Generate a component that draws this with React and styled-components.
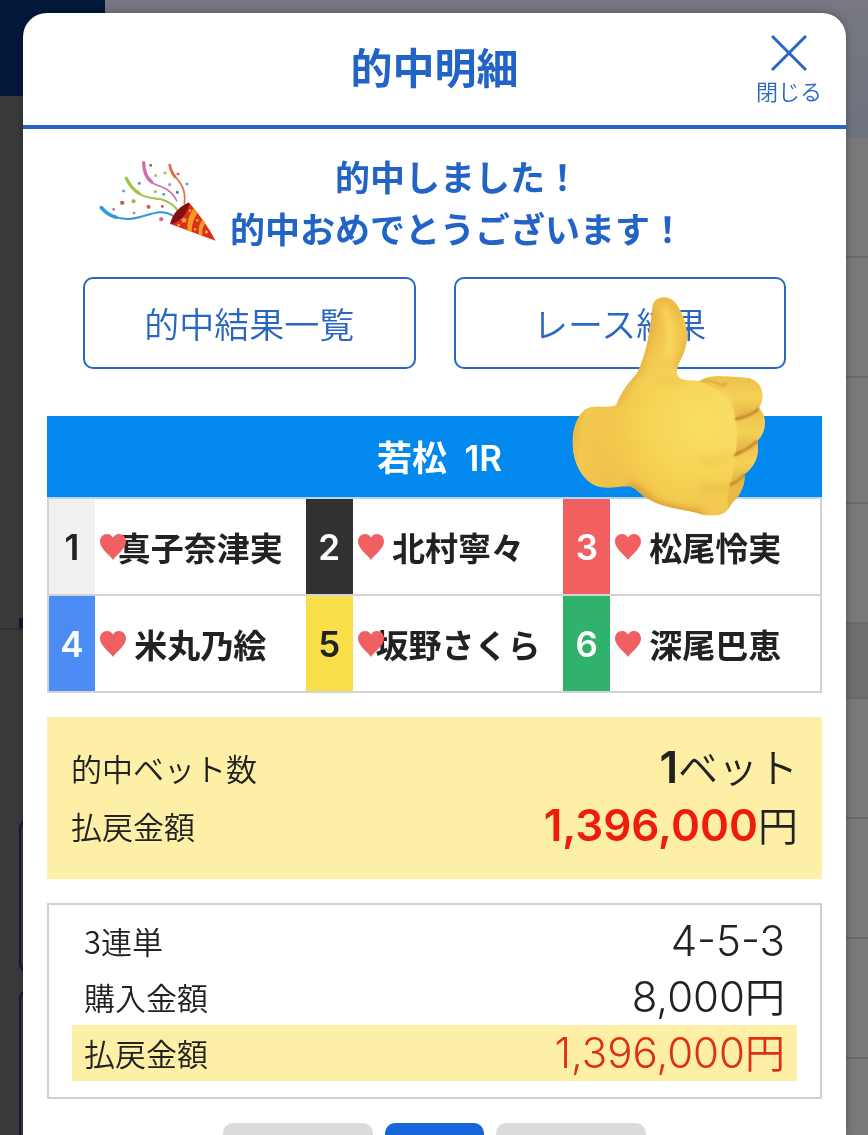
import React from "react";
import styled, { createGlobalStyle } from "styled-components";

const cjk = `"Noto Sans CJK JP", sans-serif`;

const GlobalStyle = createGlobalStyle`
  * {
    box-sizing: border-box;
  }

  body {
    margin: 0;
    background: #787878;
    color: #222;
    font-family: Inter, ${cjk};
    font-weight: 350;
    overflow: hidden;
  }

  button {
    font: inherit;
    padding: 0;
    cursor: pointer;
  }
`;

/* page behind the dialog */

const Backdrop = styled.div`
  display: flex;
  height: 100vh;
  overflow: hidden;
`;

const Rail = styled.div`
  width: 105px;
  background: #3a3a3a;
`;

const Brand = styled.div`
  height: 96px;
  background: #04183b;
`;

const RailBlock = styled.div`
  height: 534px;
  border-bottom: 2px solid #303030;
  display: flex;
  align-items: flex-end;
  padding-left: 19px;
`;

const RailTab = styled.div`
  height: 10px;
  width: 86px;
  background: #101838;
`;

const RailCards = styled.div`
  display: flex;
  flex-direction: column;
  gap: 18px;
  padding: 190px 0 0 19px;
`;

const RailCard = styled.div`
  height: 152px;
  border: 2px solid #14193f;
  border-radius: 8px;
`;

const Listing = styled.div`
  flex: 1;
`;

const ListingTop = styled.div`
  height: 138px;
  background: linear-gradient(#777881, #6f737d);
`;

const ListingRow = styled.div`
  height: ${(props) => props.$height || 120}px;
  border-bottom: 2px solid #696969;
  background: ${(props) => (props.$dark ? "#6e6e6e" : "#797979")};
`;

/* dialog */

const Modal = styled.section`
  position: fixed;
  top: 13px;
  left: 23px;
  right: 22px;
  bottom: 0;
  overflow: hidden;
  background: #fff;
  border-radius: 24px 24px 0 0;
  box-shadow: 0 0 8px rgba(0, 0, 0, 0.3);
`;

const Header = styled.header`
  display: grid;
  grid-template-columns: 1fr auto 1fr;
  align-items: center;
  height: 116px;
  padding: 0 24px;
  border-bottom: 4px solid #2765c4;
`;

const Title = styled.h1`
  grid-column: 2;
  margin: 0;
  color: #2263c8;
  font-size: 42px;
  line-height: 60px;
  font-weight: 700;
`;

const CloseButton = styled.button`
  justify-self: end;
  display: flex;
  flex-direction: column;
  align-items: center;
  gap: 6px;
  padding-top: 4px;
  border: none;
  background: none;
  color: #2a66c4;
  font-size: 22px;
  line-height: 30px;
`;

const Message = styled.div`
  display: flex;
  align-items: flex-start;
  height: 148px;
  padding: 21px 67px 0;
`;

const MessageText = styled.p`
  margin: 0;
  color: #2263c8;
  font-family: ${cjk};
  font-size: 35px;
  line-height: 52px;
  font-weight: 700;
  text-align: center;
  white-space: nowrap;
`;

const Actions = styled.div`
  position: relative;
  display: grid;
  grid-template-columns: 1fr 1fr;
  gap: 38px;
  padding: 0 60px;
`;

const ActionButton = styled.button`
  height: 92px;
  border: 2px solid #2a66c4;
  border-radius: 10px;
  background: #fff;
  color: #2a66c4;
  font-family: ${cjk};
  font-size: 35px;
  line-height: 52px;
`;

const Thumb = styled.svg`
  position: absolute;
  top: 3px;
  right: 66px;
  width: 220px;
  height: 240px;
  pointer-events: none;
`;

const Body = styled.div`
  display: flex;
  flex-direction: column;
  gap: 24px;
  padding: 47px 24px 0;
`;

const RaceTable = styled.table`
  width: 100%;
  table-layout: fixed;
  border-collapse: collapse;
`;

const RaceName = styled.th`
  height: 81px;
  padding: 0 0 0 10px;
  background: #0388ee;
  border: 2px solid #0388ee;
  border-bottom-color: #b4d6f5;
  color: #fff;
  font-size: 35px;
  line-height: 52px;
  font-weight: 600;
`;

const NumberCol = styled.col`
  width: 47px;
`;

const RacerRow = styled.tr`
  height: 97px;
  border: 2px solid #d3d3d3;
`;

const Lane = styled.th`
  padding: 0;
  background: ${(props) => props.$bg};
  color: ${(props) => props.$color};
  font-size: 35px;
  font-weight: 600;
  text-align: center;
`;

const Racer = styled.td`
  position: relative;
  padding: 0;
  font-family: ${cjk};
  font-size: 33px;
  line-height: 48px;
  font-weight: 700;
  text-align: center;
  white-space: nowrap;
`;

const Heart = styled.svg`
  position: absolute;
  left: 5px;
  top: 50%;
  width: 26px;
  height: 26px;
  margin-top: -13px;
`;

const Summary = styled.dl`
  margin: 0;
  padding: 22px 24px 24px;
  background: #feefa6;
`;

const Detail = styled.dl`
  margin: 0;
  padding: 8px 23px 16px;
  border: 2px solid #d0d0d0;
`;

const Line = styled.div`
  display: flex;
  justify-content: space-between;
  align-items: center;
  height: ${(props) => (props.$tall ? 58 : 56)}px;
  padding: ${(props) => (props.$tall ? "0" : "0 12px")};
  background: ${(props) => (props.$hit ? "#feefa6" : "none")};
`;

const Label = styled.dt`
  font-family: ${cjk};
  font-size: 31px;
  line-height: 48px;
`;

const Value = styled.dd`
  margin: 0;
  color: ${(props) => (props.$hit ? "#dd3010" : "#222")};
  font-size: 40px;
  line-height: 56px;
  white-space: nowrap;
`;

const Figure = styled.span`
  font-size: 42px;
`;

const BigFigure = styled.strong`
  color: ${(props) => (props.$hit ? "#ee1d0b" : "#222")};
  font-size: 44px;
  font-weight: 600;
`;

const Pager = styled.nav`
  display: flex;
  justify-content: center;
  gap: 12px;
`;

const PagerButton = styled.button`
  width: ${(props) => (props.$current ? 99 : 150)}px;
  height: 60px;
  border: none;
  border-radius: 10px;
  background: ${(props) => (props.$current ? "#1665da" : "#dbdbdb")};
`;

const racers = [
  [
    { lane: 1, name: "真子奈津実", bg: "#f1f1f1", color: "#222" },
    { lane: 2, name: "北村寧々", bg: "#323232", color: "#fff" },
    { lane: 3, name: "松尾怜実", bg: "#f15f61", color: "#fff" },
  ],
  [
    { lane: 4, name: "米丸乃絵", bg: "#4b8df5", color: "#fff" },
    { lane: 5, name: "坂野さくら", bg: "#f9e04a", color: "#222" },
    { lane: 6, name: "深尾巴恵", bg: "#30b26c", color: "#fff" },
  ],
];

const confetti = [
  [182, 46, "#a0643c"], [197, 77, "#9cc050"], [225, 69, "#b0b84a"], [264, 72, "#dc6a4c"],
  [148, 100, "#4a94cc"], [101, 123, "#5aa4dc"], [239, 104, "#a888c8"], [291, 102, "#58a4d8"],
  [196, 125, "#a4b060"], [221, 133, "#4aa0d8"], [262, 127, "#3878b8"], [71, 178, "#c878b0"],
  [132, 189, "#d88098"], [217, 169, "#c8643c"],
];

const confettiBig = [
  [97, 158, "#c05c3c"], [131, 153, "#98b844"], [176, 170, "#d4603c"], [214, 207, "#d860a0"],
];

const Popper = () => (
  <svg width="140" height="100" viewBox="0 0 420 300" aria-hidden="true">
    <g fill="none" strokeLinecap="round">
      <path d="M34 173 Q66 209 116 207 C170 205 205 168 252 199" stroke="#3298d6" strokeWidth="6" />
      <path d="M34 173 Q52 195 78 202" stroke="#3298d6" strokeWidth="11" />
      <path d="M109 85 C143 150 180 141 213 148 Q249 158 264 184" stroke="#a3c04b" strokeWidth="6" />
      <path d="M109 85 Q123 115 147 130" stroke="#a3c04b" strokeWidth="10" />
      <path d="M161 38 C164 98 190 101 216 111 Q246 123 260 152" stroke="#cf6faa" strokeWidth="5" />
      <path d="M161 38 Q161 77 185 96" stroke="#cf6faa" strokeWidth="10" />
      <path d="M239 45 C245 87 292 95 283 160" stroke="#d9703f" strokeWidth="5" />
      <path d="M239 45 Q243 66 255 81" stroke="#d9703f" strokeWidth="8" />
    </g>
    {confetti.map(([x, y, fill]) => (
      <rect key={`${x}-${y}`} x={x - 4} y={y - 4} width="8" height="8" rx="2" fill={fill} />
    ))}
    {confettiBig.map(([x, y, fill]) => (
      <path key={`${x}-${y}`} d={`M${x - 6} ${y - 4} l7 -2 l6 6 l-5 7 l-8 -2z`} fill={fill} />
    ))}
    <path d="M298 158 Q346 214 377 272 L241 222 Q247 178 298 158Z" fill="#dc2e1f" />
    <path d="M311 174 L323 188 Q305 214 305 245 L292 240 Q290 204 311 174Z" fill="#f59a24" />
    <path d="M338 207 L346 219 Q335 236 337 257 L326 253 Q323 228 338 207Z" fill="#f59a24" />
    <path d="M298 158 C286 157 248 186 241 222 C266 220 295 190 298 158Z" fill="#811015" />
    <g fill="#f2a532">
      <path d="M282 200 l3 6 7 1 -5 5 2 7 -7 -3 -6 4 1 -7 -5 -5 7 -1z" />
      <circle cx="266" cy="225" r="4" />
      <circle cx="300" cy="182" r="4" />
      <circle cx="322" cy="211" r="4" />
      <circle cx="315" cy="238" r="4" />
      <circle cx="349" cy="246" r="5" />
    </g>
  </svg>
);

const ThumbsUp = () => (
  <Thumb viewBox="0 0 660 720" aria-hidden="true">
    <defs>
      <radialGradient id="skin" gradientUnits="userSpaceOnUse" cx="430" cy="430" r="350">
        <stop offset="0" stopColor="#f8df62" />
        <stop offset="0.45" stopColor="#f6d456" />
        <stop offset="0.8" stopColor="#f2c64c" />
        <stop offset="1" stopColor="#edbc46" />
      </radialGradient>
      <linearGradient id="cuff" x1="0" y1="0" x2="1" y2="0.25">
        <stop offset="0" stopColor="#e4ad3b" />
        <stop offset="0.3" stopColor="#f2c850" />
        <stop offset="1" stopColor="#f3cb4e" stopOpacity="0" />
      </linearGradient>
      <linearGradient id="finger" x1="0" y1="0" x2="0" y2="1">
        <stop offset="0" stopColor="#eec04a" />
        <stop offset="0.5" stopColor="#f5d157" />
        <stop offset="1" stopColor="#e2ab3e" />
      </linearGradient>
      <filter id="soft" x="-30%" y="-30%" width="160%" height="160%">
        <feGaussianBlur stdDeviation="11" />
      </filter>
      <filter id="crease" x="-30%" y="-50%" width="160%" height="200%">
        <feGaussianBlur stdDeviation="3" />
      </filter>
      <clipPath id="hand">
        <path d="M277 82 C280 44 329 42 350 73 C374 108 387 157 379 190 C373 231 348 253 351 280 C356 306 391 300 418 303 C441 285 469 288 511 290 L554 293 C608 296 617 347 598 384 C624 411 618 457 592 483 C599 517 590 556 553 583 C557 618 539 648 512 674 C500 705 474 711 428 704 C371 685 319 690 259 654 C235 638 224 619 202 619 C171 620 142 628 112 619 C28 588 15 438 75 389 C101 371 146 389 169 374 C185 333 208 306 231 280 C261 219 270 151 277 82Z" />
      </clipPath>
    </defs>
    <g clipPath="url(#hand)">
      <rect width="660" height="720" fill="url(#skin)" />
      <path d="M30 370 H170 Q205 500 210 625 H30Z" fill="url(#cuff)" />
      <path d="M420 303 C460 278 560 285 590 300 C620 330 610 370 592 386 L526 420 Q519 355 470 330Z" fill="url(#finger)" />
      <path d="M526 420 L594 389 C627 410 620 465 590 485 L527 526 Q535 455 526 420Z" fill="url(#finger)" />
      <path d="M527 526 L592 484 C602 525 590 560 555 582 L510 616 Q528 560 527 526Z" fill="url(#finger)" />
      <path d="M510 616 L554 583 C558 630 530 665 505 687 Q498 650 510 616Z" fill="#e9b945" />
      <g filter="url(#soft)" fill="none">
        <path d="M277 82 Q270 190 231 280 Q196 310 169 374" stroke="#dfa63d" strokeWidth="12" />
        <path d="M290 300 Q330 310 380 305" stroke="#eabb49" strokeWidth="8" />
        <path d="M387 165 Q375 225 350 265" stroke="#dca13a" strokeWidth="12" />
        <path d="M202 616 Q237 624 260 654 T428 704" stroke="#d99c39" strokeWidth="24" />
        <path d="M410 538 Q454 556 506 527" stroke="#edc44e" strokeWidth="12" />
        <path d="M420 620 Q464 636 506 618" stroke="#e6b547" strokeWidth="12" />
        <path d="M465 340 Q515 355 515 420 Q520 484 504 510" stroke="#f8df6c" strokeWidth="15" />
        <path d="M310 80 Q348 150 320 230" stroke="#fadb64" strokeWidth="22" />
      </g>
      <g filter="url(#crease)" fill="none" strokeLinecap="round">
        <path d="M528 418 Q568 409 596 387" stroke="#a86d24" strokeWidth="6" />
        <path d="M525 525 Q568 506 590 484" stroke="#a86d24" strokeWidth="6" />
        <path d="M510 615 Q540 602 552 583" stroke="#a86d24" strokeWidth="5" />
        <path d="M419 302 Q460 300 481 315 Q491 318 498 309" stroke="#cf9a39" strokeWidth="4" />
      </g>
    </g>
  </Thumb>
);

const App = () => {
  return (
    <>
      <GlobalStyle />
      <Backdrop aria-hidden="true">
        <Rail>
          <Brand />
          <RailBlock>
            <RailTab />
          </RailBlock>
          <RailCards>
            <RailCard />
            <RailCard />
          </RailCards>
        </Rail>
        <Listing>
          <ListingTop />
          <ListingRow />
          <ListingRow />
          <ListingRow $height={126} />
          <ListingRow />
          <ListingRow $height={75} $dark />
          <ListingRow />
          <ListingRow />
          <ListingRow />
          <ListingRow />
        </Listing>
      </Backdrop>

      <Modal role="dialog" aria-labelledby="title">
        <Header>
          <Title id="title">的中明細</Title>
          <CloseButton type="button">
            <svg width="36" height="36" viewBox="0 0 36 36" stroke="currentColor" strokeWidth="3" aria-hidden="true">
              <path d="M1 1 L35 35 M35 1 L1 35" />
            </svg>
            閉じる
          </CloseButton>
        </Header>

        <Message>
          <Popper />
          <MessageText>
            的中しました！
            <br />
            的中おめでとうございます！
          </MessageText>
        </Message>

        <Actions>
          <ActionButton type="button">的中結果一覧</ActionButton>
          <ActionButton type="button">レース結果</ActionButton>
          <ThumbsUp />
        </Actions>

        <Body>
          <RaceTable>
            <colgroup>
              <NumberCol />
              <col />
              <NumberCol />
              <col />
              <NumberCol />
              <col />
            </colgroup>
            <thead>
              <tr>
                <RaceName colSpan={6}>若松&ensp;1R</RaceName>
              </tr>
            </thead>
            <tbody>
              {racers.map((row) => (
                <RacerRow key={row[0].lane}>
                  {row.map((racer) => (
                    <React.Fragment key={racer.lane}>
                      <Lane scope="row" $bg={racer.bg} $color={racer.color}>
                        {racer.lane}
                      </Lane>
                      <Racer>
                        {racer.name}
                        <Heart viewBox="0 0 26 26" aria-hidden="true">
                          <path
                            d="M13 26 C10 21 0 15 0 7.500 C0 3 3.200 0 7 0 C9.800 0 12 1.500 13 3.600 C14 1.500 16.200 0 19 0 C22.800 0 26 3 26 7.500 C26 15 16 21 13 26Z"
                            fill="#f06062"
                          />
                        </Heart>
                      </Racer>
                    </React.Fragment>
                  ))}
                </RacerRow>
              ))}
            </tbody>
          </RaceTable>

          <Summary>
            <Line $tall>
              <Label>的中ベット数</Label>
              <Value>
                <BigFigure>1</BigFigure>ベット
              </Value>
            </Line>
            <Line $tall>
              <Label>払戻金額</Label>
              <Value>
                <BigFigure $hit>1,396,000</BigFigure>円
              </Value>
            </Line>
          </Summary>

          <Detail>
            <Line>
              <Label>3連単</Label>
              <Value>
                <Figure>4-5-3</Figure>
              </Value>
            </Line>
            <Line>
              <Label>購入金額</Label>
              <Value>
                <Figure>8,000</Figure>円
              </Value>
            </Line>
            <Line $hit>
              <Label>払戻金額</Label>
              <Value $hit>
                <Figure>1,396,000</Figure>円
              </Value>
            </Line>
          </Detail>

          <Pager>
            <PagerButton type="button" aria-label="前へ" />
            <PagerButton type="button" aria-label="1" $current />
            <PagerButton type="button" aria-label="次へ" />
          </Pager>
        </Body>
      </Modal>
    </>
  );
};

export default App;
